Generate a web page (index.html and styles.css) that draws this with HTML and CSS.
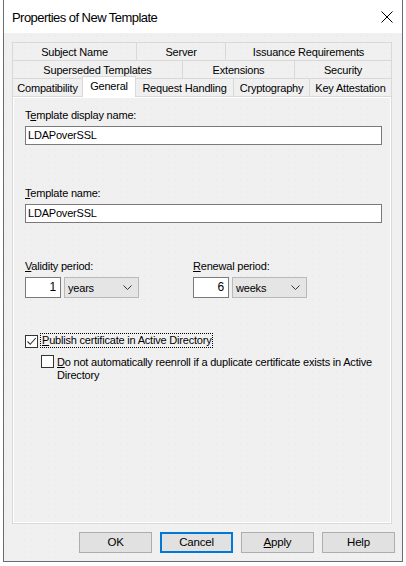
FILE: index.html
```html
<!DOCTYPE html>
<html>
<head>
<meta charset="utf-8">
<link rel="stylesheet" href="styles.css">
</head>
<body>
<div class="dialog">
  <div class="titlebar">
    <span class="title">Properties of New Template</span>
    <svg class="close" width="12" height="12" viewBox="0 0 12 12"><path d="M0.5 0.5 L11.5 11.5 M11.5 0.5 L0.5 11.5" stroke="#000" stroke-width="1" fill="none"/></svg>
  </div>
  <div class="body">
    <div class="tabs">
      <div class="row">
        <div class="tab w124">Subject Name</div>
        <div class="tab w89">Server</div>
        <div class="tab w167 last">Issuance Requirements</div>
      </div>
      <div class="row">
        <div class="tab w170">Superseded Templates</div>
        <div class="tab w112">Extensions</div>
        <div class="tab w98 last">Security</div>
      </div>
      <div class="row">
        <div class="tab w70">Compatibility</div>
        <div class="tab w54 selected">General</div>
        <div class="tab w97">Request Handling</div>
        <div class="tab w76">Cryptography</div>
        <div class="tab w83 last">Key Attestation</div>
      </div>
    </div>
    <div class="panel">
      <div class="label">T<u>e</u>mplate display name:</div>
      <div class="textbox">LDAPoverSSL</div>
      <div class="label second"><u>T</u>emplate name:</div>
      <div class="textbox">LDAPoverSSL</div>
      <div class="periods">
        <div class="period">
          <div class="label"><u>V</u>alidity period:</div>
          <div class="pair">
            <div class="num">1</div>
            <div class="combo"><span>years</span><svg width="9" height="5" viewBox="0 0 9 5"><path d="M0.5 0.5 L4.5 4.5 L8.5 0.5" stroke="#333" fill="none"/></svg></div>
          </div>
        </div>
        <div class="period">
          <div class="label"><u>R</u>enewal period:</div>
          <div class="pair">
            <div class="num">6</div>
            <div class="combo"><span>weeks</span><svg width="9" height="5" viewBox="0 0 9 5"><path d="M0.5 0.5 L4.5 4.5 L8.5 0.5" stroke="#333" fill="none"/></svg></div>
          </div>
        </div>
      </div>
      <div class="check first">
        <div class="box"><svg width="11" height="11" viewBox="0 0 11 11"><path d="M1.5 5.5 L4.2 8.3 L9.8 2" stroke="#333" stroke-width="1.1" fill="none"/></svg></div>
        <span class="focus"><u>P</u>ublish certificate in Active Directory</span>
      </div>
      <div class="check sub">
        <div class="box"></div>
        <span class="cltext"><u>D</u>o not automatically reenroll if a duplicate certificate exists in Active<br>Directory</span>
      </div>
    </div>
    <div class="buttons">
      <div class="btn">OK</div>
      <div class="btn default">Cancel</div>
      <div class="btn"><u>A</u>pply</div>
      <div class="btn">Help</div>
    </div>
  </div>
</div>
</body>
</html>
```
FILE: styles.css
```css
html, body {
  margin: 0;
  padding: 0;
  background: #ffffff;
}
body {
  font-family: "Liberation Sans", Arial, sans-serif;
  font-size: 11px;
  letter-spacing: -0.2px;
  color: #000;
  width: 406px;
  height: 566px;
  overflow: hidden;
}
.dialog {
  margin-left: 3px;
  width: 400px;
  height: 562px;
  box-sizing: border-box;
  border-left: 1px solid #6b6b6b;
  border-right: 1px solid #6b6b6b;
  border-bottom: 1px solid #6b6b6b;
  display: flex;
  flex-direction: column;
}
.titlebar {
  height: 33px;
  flex: none;
  background: #fff;
  display: flex;
  align-items: center;
  justify-content: space-between;
  padding-left: 8px;
  padding-right: 9px;
}
.title {
  font-size: 13px;
  letter-spacing: -0.55px;
  position: relative;
  top: 1px;
}
.close {
  position: relative;
  top: 0px;
}
.body {
  flex: 1;
  background-color: #f0f0f0;
  background-image: radial-gradient(circle, #e7e7e7 0.5px, transparent 0.8px);
  background-size: 6px 6px;
  padding: 9px 7px 8px 8px;
  display: flex;
  flex-direction: column;
}
.tabs {
  width: 380px;
}
.row {
  display: flex;
  height: 18px;
}
.tab {
  box-sizing: border-box;
  height: 18px;
  border-top: 1px solid #d9d9d9;
  border-left: 1px solid #d9d9d9;
  text-align: center;
  line-height: 18px;
  white-space: nowrap;
}
.tab.last {
  border-right: 1px solid #d9d9d9;
}
.tab.selected {
  background: #fff;
  height: 21px;
  margin-top: -2px;
  line-height: 18px;
  border-right: 1px solid #d9d9d9;
  position: relative;
  z-index: 2;
}
.tab.selected + .tab { border-left: none; }
.w124 { width: 124px; }
.w89 { width: 89px; }
.w167 { width: 167px; }
.w170 { width: 170px; }
.w112 { width: 112px; }
.w98 { width: 98px; }
.w70 { width: 70px; }
.w54 { width: 54px; }
.w97 { width: 97px; }
.w76 { width: 76px; }
.w83 { width: 83px; }
.panel {
  width: 380px;
  box-sizing: border-box;
  flex: 1;
  border: 1px solid #d9d9d9;
  box-shadow: inset 0 0 0 1px #ffffff;
  padding: 12px 10px 0 12px;
  position: relative;
  z-index: 1;
}
.label {
  line-height: 13px;
  height: 13px;
  margin-bottom: 4px;
  white-space: nowrap;
}
.label.second {
  margin-top: 42px;
}
.textbox {
  box-sizing: border-box;
  width: 357px;
  height: 19px;
  border: 1px solid #7a7a7a;
  background: #fff;
  line-height: 17px;
  padding-left: 2px;
}
.periods {
  display: flex;
  gap: 0;
  margin-top: 37px;
}
.period {
  width: 168px;
}
.pair {
  display: flex;
  gap: 3px;
}
.num {
  box-sizing: border-box;
  width: 36px;
  height: 21px;
  border: 1px solid #7a7a7a;
  background: #fff;
  text-align: right;
  padding-right: 4px;
  line-height: 19px;
  font-size: 12px;
}
.combo {
  box-sizing: border-box;
  width: 75px;
  height: 21px;
  border: 1px solid #b9b9b9;
  background: #e5e5e5;
  display: flex;
  align-items: center;
  justify-content: space-between;
  padding: 0 6px 0 3px;
  line-height: 19px;
}
.combo span { position: relative; top: 1px; }
.check {
  display: flex;
  align-items: flex-start;
}
.check.first {
  margin-top: 37px;
}
.check.sub {
  margin-top: 7px;
  margin-left: 16px;
}
.box {
  box-sizing: border-box;
  width: 13px;
  height: 13px;
  border: 1px solid #333;
  background: #fff;
  flex: none;
  display: flex;
  align-items: center;
  justify-content: center;
}
.focus {
  margin-left: 2px;
  margin-top: -2px;
  padding: 0 0 0 1px;
  border: 1px dotted #000;
  line-height: 13px;
  white-space: nowrap;
}
.cltext {
  margin-left: 3px;
  line-height: 13px;
  margin-top: 1px;
}
.buttons {
  display: flex;
  justify-content: flex-end;
  gap: 8px;
  margin-top: 8px;
}
.btn {
  box-sizing: border-box;
  width: 73px;
  height: 21px;
  border: 1px solid #adadad;
  background: #e1e1e1;
  text-align: center;
  line-height: 19px;
  font-size: 11.5px;
}
.btn.default {
  border: 2px solid #0078d7;
  line-height: 17px;
}
```
